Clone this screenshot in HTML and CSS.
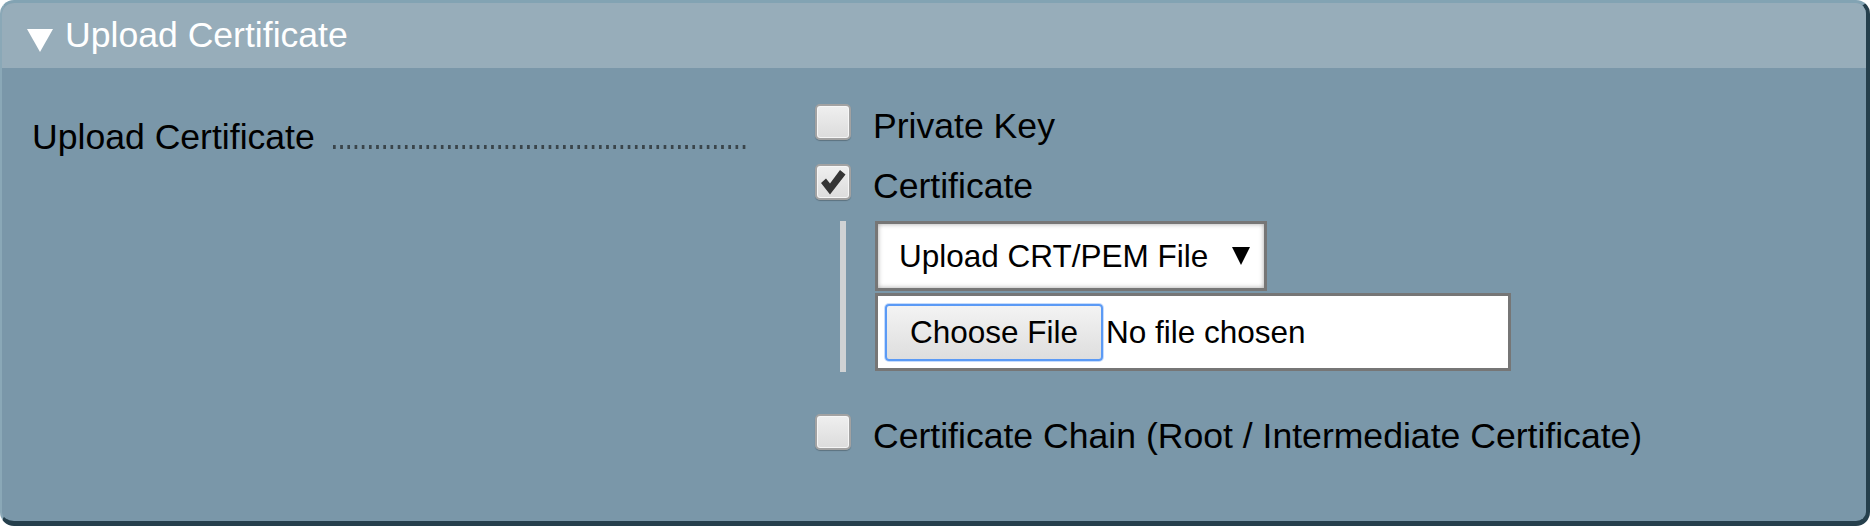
FILE: index.html
```html
<!DOCTYPE html>
<html lang="en">
<head>
<meta charset="utf-8">
<title>Upload Certificate</title>
<link rel="stylesheet" href="styles.css">
</head>
<body>
<div class="panel">
  <div class="header">
    <svg class="tri" width="26" height="23" viewBox="0 0 26 23"><polygon points="0,0 26,0 13,23" fill="#fff"/></svg>
    <span class="title">Upload Certificate</span>
  </div>
  <div class="body">
    <div class="field-label">
      <span class="label-text">Upload Certificate</span>
      <span class="leader"></span>
    </div>
    <div class="options">
      <div class="opt">
        <span class="cb"></span>
        <span class="opt-text">Private Key</span>
      </div>
      <div class="opt">
        <span class="cb"><svg width="32" height="32" viewBox="0 0 32 32"><polygon points="4,17 9,12.5 13,17.5 23,4 28.5,8.5 13,28.5" fill="#353535"/></svg></span>
        <span class="opt-text">Certificate</span>
      </div>
      <div class="sub">
        <div class="bar"></div>
        <div class="controls">
          <div class="select">
            <span>Upload CRT/PEM File</span>
            <svg width="18" height="18" viewBox="0 0 18 18"><polygon points="0,0 18,0 9,18" fill="#000"/></svg>
          </div>
          <div class="file">
            <span class="btn">Choose File</span>
            <span class="file-text">No file chosen</span>
          </div>
        </div>
      </div>
      <div class="opt chain">
        <span class="cb"></span>
        <span class="opt-text">Certificate Chain (Root / Intermediate Certificate)</span>
      </div>
    </div>
  </div>
</div>
</body>
</html>
```

FILE: styles.css
```css
* { box-sizing: border-box; }
html, body { margin: 0; padding: 0; background: #fff; }
body { font-family: "Liberation Sans", Arial, sans-serif; }

.panel {
  width: 1870px;
  height: 526px;
  border-style: solid;
  border-width: 3px 4px 5px 2px;
  border-color: #82a3b3 #253f4c #253f4c #8aa8b7;
  border-radius: 14px;
  overflow: hidden;
  background: #7a97a9;
  display: flex;
  flex-direction: column;
}

.header {
  height: 65px;
  background: #97adba;
  display: flex;
  align-items: center;
  color: #fff;
  font-size: 35.6px;
  line-height: 65px;
  flex: none;
}
.tri { margin-left: 25px; margin-top: 10px; flex: none; }
.title { margin-left: 12px; margin-top: -1px; }

.body {
  flex: 1;
  display: flex;
  align-items: flex-start;
  padding: 36px 0 0 30px;
}

.field-label {
  width: 785px;
  flex: none;
  display: flex;
  align-items: baseline;
  margin-top: 12px;
  font-size: 35.6px;
  line-height: 42px;
  color: #000;
}
.leader {
  width: 416px;
  height: 4px;
  margin-left: 18px;
  background-image: linear-gradient(to right, #3a454b 3px, transparent 3px);
  background-size: 7.2px 4px;
  background-repeat: repeat-x;
}

.options { display: flex; flex-direction: column; margin-left: -2px; }

.opt {
  display: flex;
  align-items: flex-start;
  height: 42px;
  margin-bottom: 18px;
}
.opt-text {
  margin-left: 22px;
  margin-top: 1px;
  font-size: 35.6px;
  line-height: 42px;
  color: #000;
  white-space: nowrap;
}
.cb {
  width: 36px;
  height: 36px;
  flex: none;
  border: 2px solid #a2a2a2;
  border-radius: 5px;
  background: linear-gradient(#efefef, #dcdcdc);
  box-shadow: inset 0 0 0 1px #f6f6f6, 0 1px 1px rgba(0,0,0,0.25);
  display: flex;
  align-items: center;
  justify-content: center;
}

.sub {
  display: flex;
  margin-top: -3px;
  margin-bottom: 42px;
}
.bar {
  width: 6px;
  height: 151px;
  margin-left: 25px;
  background: #cfd2d4;
  flex: none;
}
.controls {
  margin-left: 29px;
  display: flex;
  flex-direction: column;
  gap: 2px;
}
.select {
  width: 392px;
  height: 70px;
  border: 3px solid #767676;
  background: #fff;
  box-shadow: inset 0 0 5px rgba(0,0,0,0.35);
  display: flex;
  align-items: center;
  justify-content: space-between;
  padding: 0 14px 0 21px;
  font-size: 31.5px;
  color: #000;
}
.file {
  width: 636px;
  height: 78px;
  border: 3px solid #767676;
  background: #fff;
  display: flex;
  align-items: center;
  padding-left: 7px;
  font-size: 31.5px;
  color: #000;
}
.btn {
  width: 218px;
  height: 57px;
  border: 2px solid #5b9af5;
  border-radius: 4px;
  box-shadow: 0 0 0 1px rgba(91,154,245,0.35);
  background: linear-gradient(#f3f3f3, #dedede);
  display: flex;
  align-items: center;
  justify-content: center;
  flex: none;
}
.file-text { margin-left: 3px; }

.chain { margin-bottom: 0; }
```
